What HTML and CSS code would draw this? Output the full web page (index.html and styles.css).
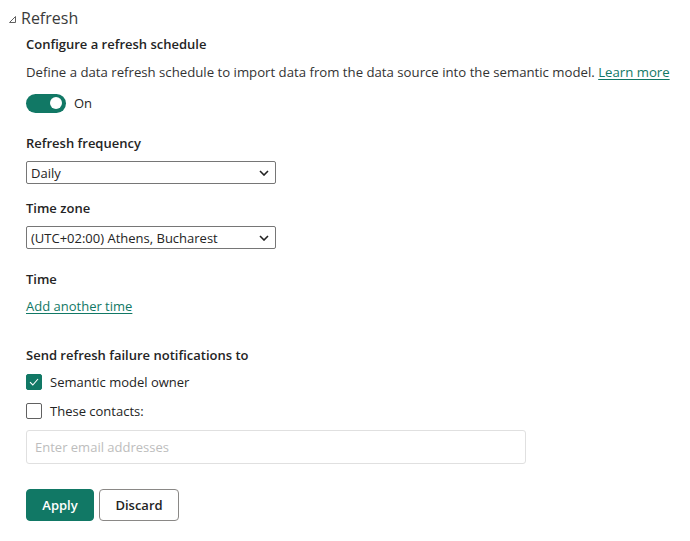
FILE: index.html
```html
<!DOCTYPE html>
<html lang="en">
<head>
<meta charset="utf-8">
<title>Refresh</title>
<link rel="stylesheet" href="styles.css">
</head>
<body>
<div class="page">
  <div class="section-head">
    <svg class="caret" width="7" height="7" viewBox="0 0 7 7"><path d="M6.5 0.5 L6.5 6.5 L0.5 6.5 Z" fill="none" stroke="#616161" stroke-width="1" stroke-linejoin="round"/></svg>
    <span class="section-title">Refresh</span>
  </div>
  <div class="content">
    <div class="title">Configure a refresh schedule</div>
    <p class="desc">Define a data refresh schedule to import data from the data source into the semantic model. <a class="link" href="#">Learn more</a></p>
    <div class="toggle-row">
      <span class="toggle"><span class="knob"></span></span>
      <span class="toggle-label">On</span>
    </div>

    <div class="label first">Refresh frequency</div>
    <div class="select">
      <span>Daily</span>
      <svg class="chev" width="10" height="6" viewBox="0 0 10 6"><path d="M1 1 L5 5 L9 1" fill="none" stroke="#222" stroke-width="1.6"/></svg>
    </div>

    <div class="label">Time zone</div>
    <div class="select">
      <span>(UTC+02:00) Athens, Bucharest</span>
      <svg class="chev" width="10" height="6" viewBox="0 0 10 6"><path d="M1 1 L5 5 L9 1" fill="none" stroke="#222" stroke-width="1.6"/></svg>
    </div>

    <div class="label time">Time</div>
    <a class="link add" href="#">Add another time</a>

    <div class="label notify">Send refresh failure notifications to</div>
    <div class="check-row">
      <span class="box checked"><svg width="10" height="8" viewBox="0 0 10 8"><path d="M1 4.2 L3.8 7 L9 1" fill="none" stroke="#fff" stroke-width="1.1"/></svg></span>
      <span>Semantic model owner</span>
    </div>
    <div class="check-row second">
      <span class="box"></span>
      <span>These contacts:</span>
    </div>
    <div class="email">Enter email addresses</div>

    <div class="buttons">
      <button class="btn primary">Apply</button>
      <button class="btn secondary">Discard</button>
    </div>
  </div>
</div>
</body>
</html>
```

FILE: styles.css
```css
* { box-sizing: border-box; }
html, body { margin: 0; padding: 0; background: #fff; }
body {
  font-family: "Open Sans", "Noto Sans", sans-serif;
  font-size: 13px;
  color: #242424;
}
.page { padding: 7px 0 0 0; }
.section-head {
  display: flex;
  align-items: center;
  height: 22px;
  padding-left: 9px;
}
.caret { margin-top: 3px; margin-right: 5px; }
.section-title { font-size: 16px; color: #3b3b3b; }
.content { padding-left: 26px; }
.title {
  font-weight: 600;
  margin-top: 5px;
  line-height: 20px;
}
.desc {
  margin: 8px 0 0 0;
  line-height: 20px;
  color: #333;
  font-size: 13.2px;
}
.link { color: #117865; text-decoration: underline; text-underline-offset: 2px; }
.toggle-row {
  display: flex;
  align-items: center;
  margin-top: 11px;
  height: 20px;
}
.toggle {
  width: 40px;
  height: 19px;
  border-radius: 10px;
  background: #117865;
  position: relative;
  display: inline-block;
}
.knob {
  position: absolute;
  width: 12px;
  height: 12px;
  border-radius: 50%;
  background: #fff;
  right: 4px;
  top: 3.5px;
}
.toggle-label { margin-left: 8px; }
.label {
  font-weight: 600;
  line-height: 20px;
  margin-top: 14px;
}
.label.first { margin-top: 20px; }
.select {
  margin-top: 8px;
  width: 250px;
  height: 23px;
  border: 1px solid #767676;
  border-radius: 2px;
  display: flex;
  align-items: center;
  justify-content: space-between;
  padding: 0 6px 0 4px;
  color: #242424;
}
.chev { margin-top: 1px; }
.label.time { margin-top: 20px; }
.add { display: block; margin-top: 7px; line-height: 20px; width: max-content; }
.label.notify { margin-top: 29px; }
.check-row {
  display: flex;
  align-items: center;
  gap: 8px;
  margin-top: 8px;
  height: 18px;
}
.check-row.second { margin-top: 11px; }
.box {
  width: 16px;
  height: 16px;
  border: 1px solid #616161;
  border-radius: 2px;
  display: inline-flex;
  align-items: center;
  justify-content: center;
}
.box.checked { background: #117865; border-color: #117865; }
.email {
  margin-top: 10px;
  width: 500px;
  height: 34px;
  border: 1px solid #e0e0e0;
  border-radius: 3px;
  padding-left: 8px;
  display: flex;
  align-items: center;
  color: #bdbdbd;
}
.buttons {
  display: flex;
  gap: 5px;
  margin-top: 25px;
}
.btn {
  font-family: inherit;
  font-size: 13px;
  font-weight: 600;
  height: 32px;
  border-radius: 4px;
  padding: 0 15px;
}
.primary { background: #117865; color: #fff; border: 1px solid #117865; width: 68px; }
.secondary { background: #fff; color: #242424; border: 1px solid #8a8886; width: 80px; }
```
